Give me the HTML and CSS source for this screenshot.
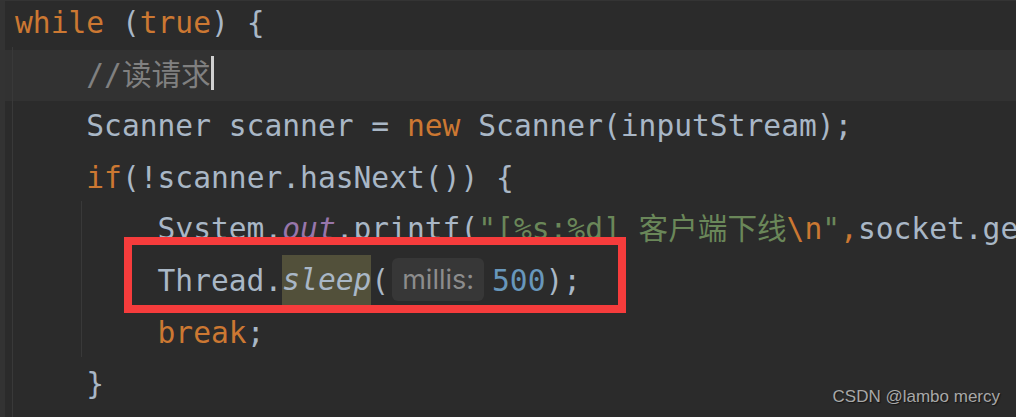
FILE: index.html
```html
<!DOCTYPE html>
<html lang="zh">
<head>
  <meta charset="UTF-8">
  <title>while (true)</title>
  <link rel="stylesheet" href="styles.css">
</head>
<body>
  <div class="editor">
    <div class="gutter-strip"></div>
    <div class="code">
      <div class="line"><span class="kw">while</span> (<span class="kw">true</span>) {</div>
      <div class="line current">    <span class="comment">//读请求</span><span class="caret"></span></div>
      <div class="line">    Scanner scanner = <span class="kw">new</span> Scanner(inputStream);</div>
      <div class="line">    <span class="kw">if</span>(!scanner.hasNext()) {</div>
      <div class="line">        System.<span class="field">out</span>.printf(<span class="str">"[%s:%d] 客户端下线<span class="kw">\n</span>"</span><span class="kw">,</span>socket.getInetAddress()</div>
      <div class="line">        Thread.<span class="hl"><span class="static">sleep</span></span>(<span class="hint">millis:</span><span class="num">500</span>);</div>
      <div class="line">        <span class="kw">break</span>;</div>
      <div class="line">    }</div>
    </div>

    <div class="guide guide-outer"></div>
    <div class="guide guide-inner"></div>
    <div class="mark"></div>
    <div class="watermark">CSDN @lambo mercy</div>
  </div>
</body>
</html>
```

FILE: styles.css
```css
html, body {
  margin: 0;
  padding: 0;
  background-color: #2b2b2b;
  overflow: hidden;
}

.editor {
  position: relative;
  display: flex;
  width: 1016px;
  height: 417px;
  overflow: hidden;
  background-color: #2b2b2b;
  border-top: 1px solid #343434;
  box-sizing: border-box;
}

.gutter-strip {
  flex: 0 0 5px;
  background-color: #333333;
}

.code {
  flex: 1;
  min-width: 0;
  margin-top: -3px;
  font-family: "DejaVu Sans Mono", "Noto Sans CJK SC", monospace;
  font-size: 29.6px;
  line-height: 51.6px;
  color: #a9b7c6;
}

.line {
  height: 51.6px;
  padding-left: 10px;
  white-space: pre;
}

.line.current {
  background-color: #323232;
}

.kw {
  color: #cc7832;
}

.comment {
  color: #808080;
}

.str {
  color: #6a8759;
}

.num {
  color: #6897bb;
}

.field {
  color: #9876aa;
  font-style: italic;
}

.static {
  font-style: italic;
}

.hl {
  display: inline-block;
  height: 50px;
  vertical-align: top;
  margin-top: -1px;
  background-color: #52503a;
}

.caret {
  display: inline-block;
  width: 3px;
  height: 34px;
  vertical-align: middle;
  margin-top: -6px;
  background-color: #d0d0d0;
}

.hint {
  display: inline-block;
  height: 43px;
  line-height: 43px;
  padding: 0 10px 0 10px;
  margin: 0 8px 0 3px;
  vertical-align: top;
  margin-top: 2px;
  border-radius: 6px;
  background-color: #373737;
  color: #8c8c8c;
  font-family: Inter, "Noto Sans", sans-serif;
  font-size: 27px;
}

.guide {
  position: absolute;
  width: 1px;
  background-color: #393939;
}

.guide-outer {
  left: 12px;
  top: 46px;
  bottom: 0;
}

.guide-inner {
  left: 81px;
  top: 200px;
  height: 156px;
}

.mark {
  position: absolute;
  left: 124px;
  top: 236px;
  width: 502px;
  height: 76px;
  border: 8px solid #f63c3c;
  box-sizing: border-box;
}

.watermark {
  position: absolute;
  right: 16px;
  bottom: 10px;
  font-family: "Liberation Sans", Arial, sans-serif;
  font-size: 17px;
  color: #a8a8a8;
  text-shadow: 1px 1px 1px #151515;
}
```
